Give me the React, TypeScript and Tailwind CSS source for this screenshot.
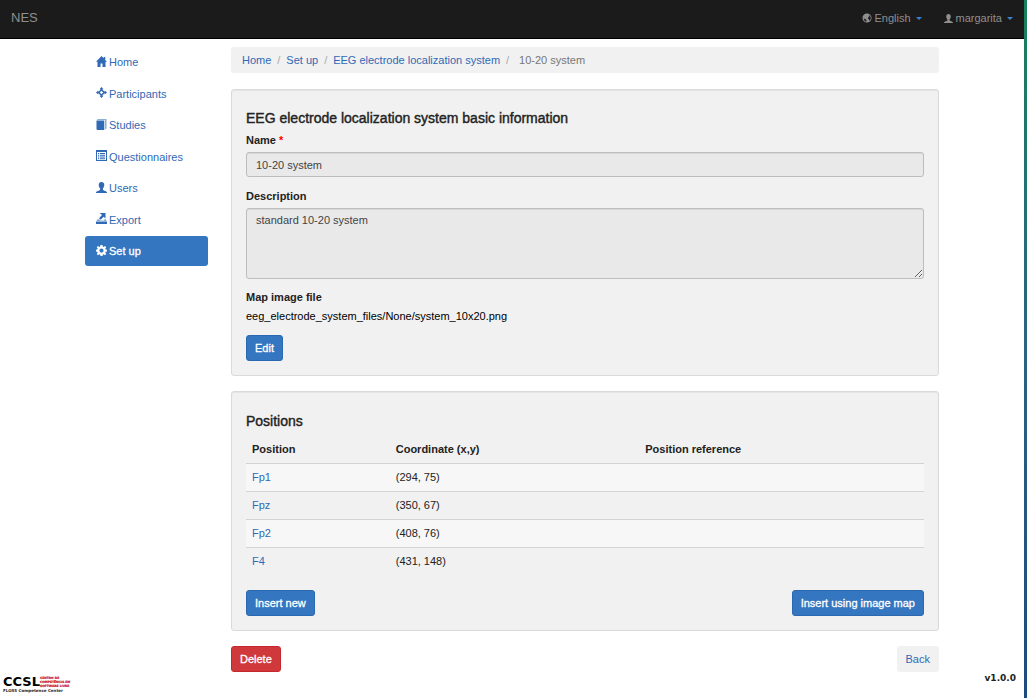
import type { ReactNode } from 'react';

type IconProps = { className?: string };

function Svg({ children, className = 'size-[11px]' }: IconProps & { children: ReactNode }) {
  return (
    <svg viewBox="0 0 22 22" fill="currentColor" aria-hidden="true" className={`shrink-0 ${className}`}>
      {children}
    </svg>
  );
}

const HomeIcon = () => (
  <Svg>
    <path d="M11 0 0 11.500h3V22h6v-7h4v7h6V11.500h3L18.500 7.800V2h-3v2.700z" />
  </Svg>
);

const MoveIcon = () => (
  <Svg>
    <path d="M11 0l4 4.500h-2.500V7h-3V4.500H7zM22 11l-4.500 4v-2.500H15v-3h2.500V7zM11 22l-4-4.500h2.500V15h3v2.500H15zM0 11l4.500-4v2.500H7v3H4.500V15z" />
    <path d="M11 5.500 16.500 11 11 16.500 5.500 11z" fill="none" stroke="currentColor" strokeWidth="3" />
  </Svg>
);

const BookIcon = () => (
  <Svg>
    <path d="M1 3h15.500v19H2.500L1 20.500z" />
    <path opacity=".55" d="M3.500 0H21v19l-3 2V2H1.500z" />
  </Svg>
);

const ListIcon = () => (
  <Svg>
    <path
      fillRule="evenodd"
      d="M0 0h22v22H0zM2 4v16h18V4zM4 6h2.500v2H4zm4 0h10v2H8zM4 9.500h2.500v2H4zm4 0h10v2H8zM4 13h2.500v2H4zm4 0h10v2H8zM4 16.500h2.500v2H4zm4 0h10v2H8z"
    />
  </Svg>
);

const UserIcon = ({ className }: IconProps) => (
  <Svg className={className}>
    <path d="M11 0c3.600 0 5.500 2.500 5.500 6 0 3-1.200 5.500-2.700 7v2.200c0 1 .8 1.300 2 1.800 3 1.200 6.200 2 6.200 4.200V22H0v-.8C0 19 3.200 18.200 6.200 17c1.200-.5 2-.8 2-1.800V13C6.700 11.500 5.500 9 5.500 6c0-3.500 1.900-6 5.500-6z" />
  </Svg>
);

const ExportIcon = () => (
  <Svg>
    <path d="M7 0h12v11l-3.500-3.500L9 13.500 6 10.500 12 4z" />
    <path opacity=".6" d="M3 12.500h3l2 2.500h8l1-2.500h2.500L21 16H1z" />
    <path d="M0 17h22v5H0z" />
  </Svg>
);

const CogIcon = () => (
  <Svg>
    <path
      fillRule="evenodd"
      d="M9 0h4l.6 3 1.900.8L18 2l2.500 2.500L18.600 7l.8 2 2.600.5v3.500l-2.600.5-.8 2 1.900 2.500L18 20.500l-2.500-1.800-1.900.8L13 22H9l-.6-2.500-1.900-.8L4 20.500 1.500 18l1.900-2.500-.8-2L0 13V9.500L2.600 9l.8-2-1.900-2.500L4 2l2.500 1.800L8.400 3zM11 7a4.200 4.200 0 1 0 0 8.400A4.200 4.200 0 0 0 11 7z"
    />
  </Svg>
);

const GlobeIcon = () => (
  <Svg className="size-[10px]">
    <path
      fillRule="evenodd"
      d="M11 1a10 10 0 1 0 0 20 10 10 0 0 0 0-20zM15 4l3 2.500L19.500 11l-1 4-2 2-1.500-3.500-2-1.500 1-3 2.500-2zM3.500 12l3.500 1 3 2.500-1 3.500-3-1.500z"
    />
  </Svg>
);

const navItems = [
  { label: 'Home', icon: <HomeIcon /> },
  { label: 'Participants', icon: <MoveIcon /> },
  { label: 'Studies', icon: <BookIcon /> },
  { label: 'Questionnaires', icon: <ListIcon /> },
  { label: 'Users', icon: <UserIcon /> },
  { label: 'Export', icon: <ExportIcon /> },
  { label: 'Set up', icon: <CogIcon />, active: true },
];

const crumbs = ['Home', 'Set up', 'EEG electrode localization system'];

const positions = [
  { name: 'Fp1', coordinate: '(294, 75)' },
  { name: 'Fpz', coordinate: '(350, 67)' },
  { name: 'Fp2', coordinate: '(408, 76)' },
  { name: 'F4', coordinate: '(431, 148)' },
];

function Caret() {
  return (
    <svg viewBox="0 0 6 3" className="ml-[5px] h-[3px] w-[6px]" fill="#3b82d0" aria-hidden="true">
      <path d="M0 0h6L3 3z" />
    </svg>
  );
}

function Button({ children }: { children: ReactNode }) {
  return (
    <button
      type="button"
      className="h-[26px] rounded-[3px] border border-[#2a69b0] bg-[#3576c0] px-[8px] text-white [-webkit-text-stroke:0.3px_white]"
    >
      {children}
    </button>
  );
}

function Card({ children }: { children: ReactNode }) {
  return (
    <section className="rounded-[3px] border border-[#dadada] bg-[#f1f1f1] p-[14px] shadow-[inset_0_1px_1px_rgba(0,0,0,0.05)]">
      {children}
    </section>
  );
}

const headingClass = 'text-[14px] leading-[16px] text-[#222] [-webkit-text-stroke:0.4px_#222]';
const fieldClass =
  'block w-full rounded-[3px] border border-[#bdbdbd] bg-[#e9e9e9] px-[9px] text-[#444] shadow-[inset_0_1px_1px_rgba(0,0,0,0.075)] outline-none';

export default function App() {
  return (
    <div className="flex min-h-screen bg-white font-['Liberation_Sans',Arial,sans-serif] text-[11px] leading-[16px] text-[#222]">
      <div className="flex min-w-0 flex-1 flex-col">
        <header className="flex h-[39px] items-center justify-between border-b border-black bg-[#1b1b1b] px-[11px] pb-[2px] text-[#8f8f8f]">
          <a href="#" className="text-[13px]">NES</a>
          <div className="flex gap-[22px]">
            <button type="button" className="flex items-center">
              <GlobeIcon />
              <span className="ml-[2px]">English</span>
              <Caret />
            </button>
            <button type="button" className="flex items-center">
              <UserIcon className="size-[9px]" />
              <span className="ml-[3px]">margarita</span>
              <Caret />
            </button>
          </div>
        </header>

        <div className="flex gap-[23px] px-[85px] pt-[8px]">
          <nav className="flex h-[219px] w-[123px] shrink-0 flex-col justify-between">
            {navItems.map((item) => (
              <a
                key={item.label}
                href="#"
                className={
                  item.active
                    ? 'flex h-[30px] items-center gap-[2px] rounded-[3px] bg-[#3576c0] px-[11px] text-white [-webkit-text-stroke:0.3px_white]'
                    : 'flex h-[30px] items-center gap-[2px] rounded-[3px] px-[11px] text-[#3069b5]'
                }
              >
                <span className="pb-[2px]">{item.icon}</span>
                {item.label}
              </a>
            ))}
          </nav>

          <main className="min-w-0 flex-1">
            <ol className="mb-[16px] flex h-[26px] items-center rounded-[3px] bg-[#f1f1f1] px-[11px]">
              {crumbs.map((crumb) => (
                <li key={crumb} className="flex">
                  <a href="#" className="text-[#3069b5]">{crumb}</a>
                  <span className="w-[15px] text-center text-[#aaa]">/</span>
                </li>
              ))}
              <li className="ml-[4px] text-[#777]">10-20 system</li>
            </ol>

            <div className="flex flex-col gap-[15px]">
              <Card>
                <h2 className={`mt-[6px] ${headingClass}`}>EEG electrode localization system basic information</h2>
                <label htmlFor="name" className="mt-[6px] mb-[4px] block font-bold">
                  Name <span className="text-[#f00]">*</span>
                </label>
                <input id="name" readOnly value="10-20 system" className={`h-[25px] ${fieldClass}`} />
                <label htmlFor="description" className="mt-[11px] mb-[4px] block font-bold">
                  Description
                </label>
                <textarea
                  id="description"
                  readOnly
                  value="standard 10-20 system"
                  className={`h-[71px] resize-y py-[3px] ${fieldClass}`}
                />
                <h3 className="mt-[10px] font-bold">Map image file</h3>
                <p className="mt-[3px] mb-[11px] text-black">eeg_electrode_system_files/None/system_10x20.png</p>
                <Button>Edit</Button>
              </Card>

              <Card>
                <h2 className={`mt-[7px] ${headingClass}`}>Positions</h2>
                <table className="mt-[6px] mb-[15px] w-full table-fixed border-collapse text-left">
                  <thead>
                    <tr className="h-[28px] border-b border-[#d3d3d3]">
                      <th className="w-[21.2%] px-[6px]">Position</th>
                      <th className="w-[36.8%] px-[6px]">Coordinate (x,y)</th>
                      <th className="px-[6px]">Position reference</th>
                    </tr>
                  </thead>
                  <tbody>
                    {positions.map((position) => (
                      <tr
                        key={position.name}
                        className="h-[28px] border-b border-[#d3d3d3] odd:bg-[#f7f7f7] last:border-b-0"
                      >
                        <td className="px-[6px]">
                          <a href="#" className="text-[#3069b5]">{position.name}</a>
                        </td>
                        <td className="px-[6px]">{position.coordinate}</td>
                        <td />
                      </tr>
                    ))}
                  </tbody>
                </table>
                <div className="flex justify-between">
                  <Button>Insert new</Button>
                  <Button>Insert using image map</Button>
                </div>
              </Card>

              <div className="flex justify-between">
                <button
                  type="button"
                  className="h-[26px] rounded-[3px] border border-[#c4282c] bg-[#cf393c] px-[8px] text-white [-webkit-text-stroke:0.3px_white]"
                >
                  Delete
                </button>
                <a href="#" className="flex h-[26px] items-center rounded-[3px] bg-[#f1f1f1] px-[9px] text-[#3069b5]">
                  Back
                </a>
              </div>
            </div>
          </main>
        </div>

        <footer className="mt-auto flex h-[26px] items-start justify-between pr-[8px] pl-[3px] font-['DejaVu_Sans',Verdana,sans-serif] font-bold">
          <div className="pt-[4px]">
            <div className="flex items-center">
              <span className="text-[13px] leading-[12px] text-black">CCSL</span>
              <span className="flex flex-col text-[3px] leading-[4px] whitespace-nowrap text-[#c8102e] [-webkit-text-stroke:0.2px_#c8102e]">
                <span>CENTRO DE</span>
                <span>COMPETÊNCIA EM</span>
                <span>SOFTWARE LIVRE</span>
              </span>
            </div>
            <div className="text-[4px] leading-[5px] text-[#222]">FLOSS Competence Center</div>
          </div>
          <span className="text-[9px] leading-[12px] text-[#222]">v1.0.0</span>
        </footer>
      </div>
      <div className="w-[3px] shrink-0 bg-linear-to-b from-[#17805a] via-[#2c6282] to-[#1d4a7c]" />
    </div>
  );
}
